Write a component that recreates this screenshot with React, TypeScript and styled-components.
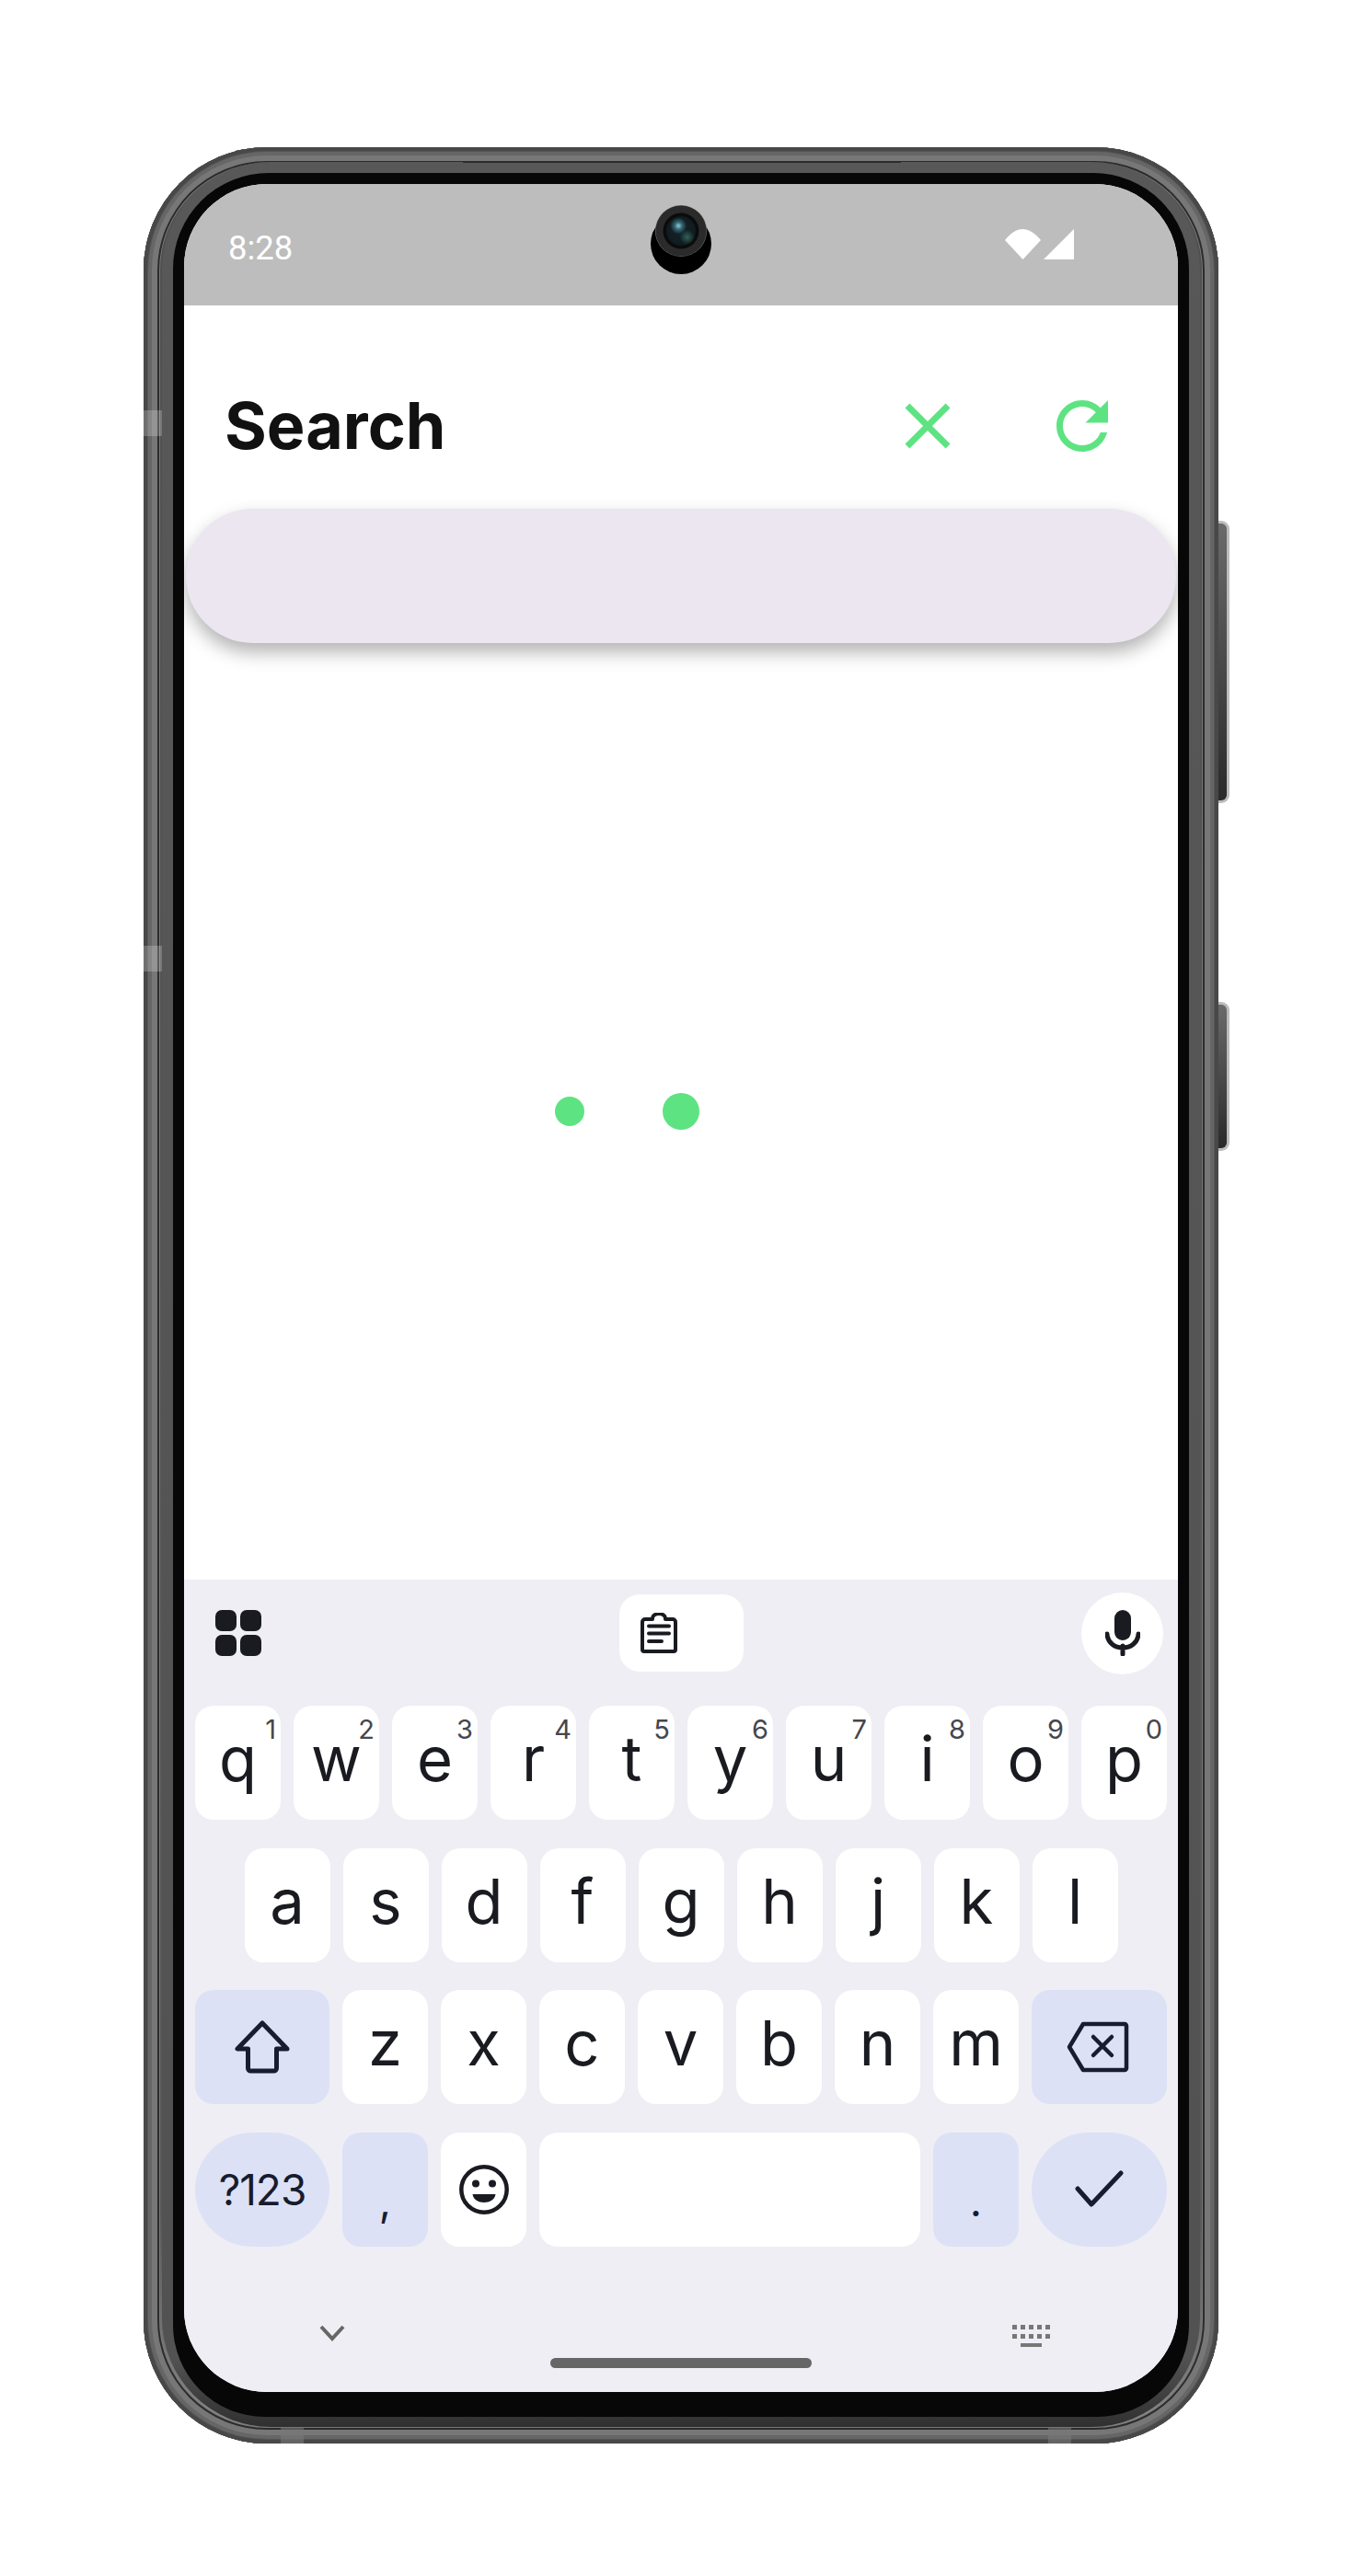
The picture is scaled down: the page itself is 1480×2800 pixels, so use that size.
import React from "react";
import styled, { createGlobalStyle } from "styled-components";

const GREEN = "#5ee383";
const INK = "#191b21";
const NAVY = "#171c2e";

const GlobalStyle = createGlobalStyle`
	html, body {
		margin: 0;
		background: #fff;
	}
	* {
		box-sizing: border-box;
	}
`;

const ROW_1 = [
	["q", "1"],
	["w", "2"],
	["e", "3"],
	["r", "4"],
	["t", "5"],
	["y", "6"],
	["u", "7"],
	["i", "8"],
	["o", "9"],
	["p", "0"],
];
const ROW_2 = ["a", "s", "d", "f", "g", "h", "j", "k", "l"];
const ROW_3 = ["z", "x", "c", "v", "b", "n", "m"];

const App: React.FC = () => {
	return (
		<Page>
			<GlobalStyle />
			<Phone>
				<SideButton $top={406} $height={307} />
				<SideButton $top={929} $height={162} />
				<AntennaSide $top={286} />
				<AntennaSide $top={868} />
				<AntennaBottom $left={149} />
				<AntennaBottom $left={983} />
				<Bezel>
					<Slit />
					<Glass>
						<Screen>
							<StatusBar>
								<Time>8:28</Time>
								<Camera>
									<Lens />
								</Camera>
								<svg viewBox="0 0 75 33" width="75" height="33">
									<path d="M0 12 Q19 -12 39 12 L19.5 33 Z" fill="#fff" />
									<path d="M42 33 L75 0 V33 Z" fill="#fff" />
								</svg>
							</StatusBar>

							<Header>
								<Title>Search</Title>
								<HeaderActions>
									<HeaderIcon viewBox="0 0 24 24">
										<path d="M19 6.41L17.59 5 12 10.59 6.41 5 5 6.41 10.59 12 5 17.59 6.41 19 12 13.41 17.59 19 19 17.59 13.41 12 19 6.41z" />
									</HeaderIcon>
									<HeaderIcon viewBox="0 0 24 24">
										<path d="M17.65 6.35C16.2 4.9 14.21 4 12 4c-4.42 0-7.99 3.58-7.99 8s3.57 8 7.99 8c3.73 0 6.84-2.55 7.73-6h-2.08c-.82 2.33-3.04 4-5.65 4-3.31 0-6-2.69-6-6s2.69-6 6-6c1.66 0 3.14.69 4.22 1.78L13 11h7V4l-2.35 2.35z" />
									</HeaderIcon>
								</HeaderActions>
							</Header>

							<SearchBar />

							<Content>
								<Loader>
									<Dot $size={32} />
									<Dot $size={40} />
								</Loader>
							</Content>

							<Keyboard>
								<Toolbar>
									<WidgetsIcon width="50" height="50" viewBox="0 0 50 50" fill={INK}>
										<rect x="0" y="0" width="23" height="23" rx="7" />
										<rect x="27" y="0" width="23" height="23" rx="7" />
										<rect x="0" y="27" width="23" height="23" rx="7" />
										<rect x="27" y="27" width="23" height="23" rx="7" />
									</WidgetsIcon>
									<ClipboardPill>
										<svg width="40" height="44" viewBox="0 0 40 44" fill="none" stroke={INK} strokeWidth="4">
											<path d="M13 7 V6 a7 5 0 0 1 14 0 V7 H35 a3 3 0 0 1 3 3 V40 a2 2 0 0 1 -2 2 H4 a2 2 0 0 1 -2 -2 V10 a3 3 0 0 1 3 -3 Z" strokeLinejoin="round" />
											<path d="M9 14.5 H31 M9 22.5 H31 M9 31 H23" strokeLinecap="round" />
										</svg>
									</ClipboardPill>
									<MicButton>
										<svg width="38" height="50" viewBox="0 0 38 50" fill="none">
											<rect x="10" y="0" width="18" height="33" rx="9" fill={INK} />
											<path d="M2 26 C3 46 35 46 36 26 M19 39 V48" stroke={INK} strokeWidth="5" strokeLinecap="round" />
										</svg>
									</MicButton>
								</Toolbar>

								<Keys>
									<KeyRow>
										{ROW_1.map(([letter, hint]) => (
											<Key key={letter}>
												<Letter>{letter}</Letter>
												<Hint>{hint}</Hint>
											</Key>
										))}
									</KeyRow>
									<KeyRow $center>
										{ROW_2.map((letter) => (
											<Key key={letter}>
												<Letter>{letter}</Letter>
											</Key>
										))}
									</KeyRow>
									<KeyRow>
										<Key $width={146} $accent>
											<svg width="60" height="58" viewBox="0 0 60 58" fill="none">
												<path d="M30 3 L3 31 H14.5 V52 a3 3 0 0 0 3 3 H42.5 a3 3 0 0 0 3 -3 V31 H57 Z" stroke={NAVY} strokeWidth="5" strokeLinejoin="round" />
											</svg>
										</Key>
										{ROW_3.map((letter) => (
											<Key key={letter}>
												<Letter>{letter}</Letter>
											</Key>
										))}
										<Key $width={147} $accent>
											<BackspaceIcon width="68" height="58" viewBox="0 0 68 58" fill="none" stroke={NAVY} strokeWidth="4.5" strokeLinejoin="round" strokeLinecap="round">
												<path d="M3 29 L18 4 H63 a2 2 0 0 1 2 2 V52 a2 2 0 0 1 -2 2 H18 Z" />
												<path d="M29 18 L49 38 M49 18 L29 38" />
											</BackspaceIcon>
										</Key>
									</KeyRow>
									<KeyRow>
										<Key $width={146} $accent $pill $small>
											?123
										</Key>
										<Key $accent $punct>
											,
										</Key>
										<Key>
											<svg width="54" height="54" viewBox="0 0 54 54" fill="none">
												<circle cx="27" cy="27" r="24.7" stroke={INK} strokeWidth="4.5" />
												<circle cx="18" cy="20.5" r="4" fill={INK} />
												<circle cx="36" cy="20.5" r="4" fill={INK} />
												<path d="M14.5 32 H39.5 C38 44 16 44 14.5 32 Z" fill={INK} />
											</svg>
										</Key>
										<Key $width={414} />
										<Key $accent $punct>
											.
										</Key>
										<Key $width={147} $accent $pill>
											<svg width="54" height="42" viewBox="0 0 54 42" fill="none">
												<path d="M3 20 L18 37 L50 3" stroke={NAVY} strokeWidth="5" strokeLinecap="round" strokeLinejoin="round" />
											</svg>
										</Key>
									</KeyRow>
								</Keys>

								<NavBar>
									<svg width="28" height="18" viewBox="0 0 28 18" fill="none">
										<path d="M2 2 L14 15 L26 2" stroke="#666" strokeWidth="4" />
									</svg>
									<GestureBar />
									<svg width="41" height="24" viewBox="0 0 41 24" fill="#777">
										{[0, 9, 18, 27, 36].map((x) => (
											<React.Fragment key={x}>
												<rect x={x} y="0" width="5" height="5" />
												<rect x={x} y="10" width="5" height="5" />
											</React.Fragment>
										))}
										<rect x="9" y="20" width="23" height="4" />
									</svg>
								</NavBar>
							</Keyboard>
						</Screen>
					</Glass>
				</Bezel>
			</Phone>
		</Page>
	);
};

const Page = styled.div`
	width: 1480px;
	height: 2800px;
	padding: 160px 156px 0;
	background: #fff;
`;

const Phone = styled.div`
	position: relative;
	width: 1168px;
	height: 2496px;
	padding: 16px 20px 18px;
	border-radius: 134px;
	background: linear-gradient(180deg, #505050 0%, #585858 90%, #8a8a8a 100%);
	box-shadow: inset 0 0 0 4px #484848, inset 0 0 0 5px #555, inset 0 0 0 9px #666, inset 0 0 0 15px #777,
		inset 0 0 0 17px #2c2c2c, inset 0 0 0 18px #777;
`;

const SideButton = styled.div<{ $top: number; $height: number }>`
	position: absolute;
	top: ${({ $top }) => $top}px;
	right: -12px;
	width: 12px;
	height: ${({ $height }) => $height}px;
	border: 3px solid #bcbcbc;
	border-left: 0;
	border-radius: 0 9px 9px 0;
	background: linear-gradient(180deg, #6a6a6a 0%, #2a2a2a 100%);
`;

const AntennaSide = styled.div<{ $top: number }>`
	position: absolute;
	z-index: 2;
	top: ${({ $top }) => $top}px;
	left: 0;
	width: 20px;
	height: 28px;
	background: rgba(255, 255, 255, 0.22);
`;

const AntennaBottom = styled.div<{ $left: number }>`
	position: absolute;
	z-index: 2;
	bottom: 0;
	left: ${({ $left }) => $left}px;
	width: 25px;
	height: 18px;
	background: rgba(120, 120, 120, 0.6);
`;

const Bezel = styled.div`
	position: relative;
	height: 100%;
	padding: 12px 12px 11px;
	border-radius: 118px;
	background: linear-gradient(180deg, #585858 0%, #525252 97%, #303030 100%);
`;

const Slit = styled.div`
	position: absolute;
	top: -1px;
	left: 327px;
	width: 476px;
	height: 2px;
	background: #2c2c2c;
`;

const Glass = styled.div`
	height: 100%;
	padding: 12px 12px 28px;
	border-radius: 104px 104px 100px 100px;
	background: #070707;
`;

const Screen = styled.div`
	display: flex;
	flex-direction: column;
	position: relative;
	height: 2400px;
	overflow: hidden;
	border-radius: 90px;
	background: #fff;
`;

const StatusBar = styled.div`
	display: flex;
	flex: none;
	align-items: flex-start;
	justify-content: space-between;
	position: relative;
	height: 132px;
	padding: 49px 113px 0 48px;
	background: #bdbdbd;
`;

const Time = styled.div`
	color: #fff;
	font-family: Roboto, sans-serif;
	font-size: 36.5px;
	font-weight: 400;
	line-height: 42px;
`;

const Camera = styled.div`
	position: absolute;
	top: 32px;
	left: 507px;
	width: 66px;
	height: 66px;
	border-radius: 50%;
	background: #000;
`;

const Lens = styled.div`
	position: absolute;
	top: -9px;
	left: 5px;
	width: 56px;
	height: 56px;
	border-radius: 50%;
	background: radial-gradient(circle at 45% 40%, rgba(140, 215, 230, 0.95) 0, rgba(80, 150, 165, 0.6) 4px, transparent 9px),
		radial-gradient(circle at 62% 62%, rgba(60, 120, 105, 0.75) 0, transparent 8px),
		radial-gradient(circle at 50% 50%, #14242a 0, #101c20 15px, #0a0a0a 17px, #0c0c0c 19px, #2b2b2b 20px, #2a2a2a 27px, #777 28px);
`;

const Header = styled.div`
	display: flex;
	flex: none;
	align-items: center;
	justify-content: space-between;
	height: 221px;
	padding: 41px 62px 0 44px;
`;

const Title = styled.div`
	color: #111;
	font-family: Inter, sans-serif;
	font-size: 70px;
	font-weight: 700;
	line-height: 84px;
`;

const HeaderActions = styled.div`
	display: flex;
	gap: 84px;
`;

const HeaderIcon = styled.svg`
	width: 84px;
	height: 84px;
	fill: ${GREEN};
`;

const SearchBar = styled.div`
	flex: none;
	height: 146px;
	margin: 0 2px;
	border-radius: 73px;
	background: #ebe6f0;
	box-shadow: 0 10px 20px rgba(0, 0, 0, 0.3);
`;

const Content = styled.div`
	display: flex;
	flex: 1;
	align-items: center;
	justify-content: center;
`;

const Loader = styled.div`
	display: grid;
	grid-template-columns: repeat(3, 121px);
	justify-items: center;
	align-items: center;
`;

const Dot = styled.div<{ $size: number }>`
	width: ${({ $size }) => $size}px;
	height: ${({ $size }) => $size}px;
	border-radius: 50%;
	background: ${GREEN};
`;

const Keyboard = styled.div`
	display: flex;
	flex: none;
	flex-direction: column;
	height: 883px;
	background: #eeeef4;
`;

const Toolbar = styled.div`
	display: grid;
	flex: none;
	grid-template-columns: 1fr auto 1fr;
	align-items: center;
	height: 137px;
	padding: 0 16px 21px;
	& > :last-child {
		justify-self: end;
	}
`;

const WidgetsIcon = styled.svg`
	margin-left: 18px;
`;

const ClipboardPill = styled.div`
	display: flex;
	align-items: center;
	width: 135px;
	height: 84px;
	padding-left: 23px;
	border-radius: 22px;
	background: #fff;
`;

const MicButton = styled.div`
	display: flex;
	align-items: center;
	justify-content: center;
	width: 89px;
	height: 89px;
	border-radius: 50%;
	background: #fff;
`;

const Keys = styled.div`
	display: flex;
	flex: none;
	flex-direction: column;
	gap: 30.7px;
	padding: 0 12px;
`;

const KeyRow = styled.div<{ $center?: boolean }>`
	display: flex;
	gap: 14px;
	justify-content: ${({ $center }) => ($center ? "center" : "flex-start")};
`;

const Key = styled.div<{ $width?: number; $accent?: boolean; $pill?: boolean; $small?: boolean; $punct?: boolean }>`
	display: flex;
	flex: none;
	align-items: center;
	justify-content: center;
	position: relative;
	width: ${({ $width }) => $width ?? 93}px;
	height: 124px;
	padding-top: ${({ $punct }) => ($punct ? 24 : 0)}px;
	border-radius: ${({ $pill }) => ($pill ? "62px" : "20px")};
	background: ${({ $accent }) => ($accent ? "#dde1f6" : "#fff")};
	color: ${({ $accent }) => ($accent ? NAVY : INK)};
	font-family: Inter, sans-serif;
	font-size: ${({ $small, $punct }) => ($small || $punct ? 46 : 67)}px;
	font-weight: 400;
	letter-spacing: ${({ $small }) => ($small ? "-1px" : "0")};
	line-height: 1;
`;

const Letter = styled.span`
	padding-bottom: 9px;
`;

const BackspaceIcon = styled.svg`
	margin-right: 4px;
`;

const Hint = styled.span`
	position: absolute;
	top: 11px;
	right: 5px;
	color: #45464f;
	font-family: Inter, sans-serif;
	font-size: 29px;
	line-height: 1;
`;

const NavBar = styled.div`
	display: flex;
	flex: 1;
	align-items: flex-start;
	justify-content: space-between;
	position: relative;
	padding: 85px 139px 0 147px;
`;

const GestureBar = styled.div`
	position: absolute;
	left: 398px;
	bottom: 26px;
	width: 284px;
	height: 11px;
	border-radius: 6px;
	background: #666;
`;

export default App;
